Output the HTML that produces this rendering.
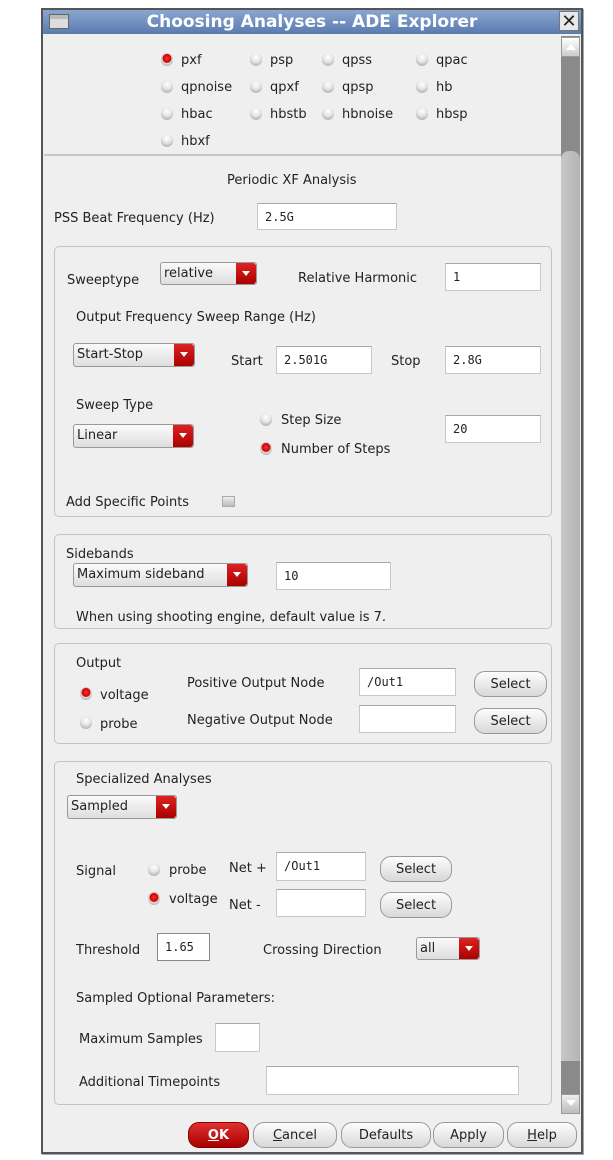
<!DOCTYPE html>
<html><head><meta charset="utf-8"><style>
*{box-sizing:border-box;margin:0;padding:0}
body{width:613px;height:1160px;background:#fff;position:relative;overflow:hidden;font-family:"DejaVu Sans","Liberation Sans",sans-serif;font-size:13px;color:#222}
div,span{position:absolute}
.t{white-space:nowrap;line-height:16px;margin-top:2px}
.in{background:#fff;border:1px solid #c8c8c8;border-top-color:#a8a8a8;font-family:"DejaVu Sans Mono","Liberation Mono",monospace;font-size:12px;padding-left:7px;line-height:26px}
.dd{border:1px solid #999;border-radius:3px;background:linear-gradient(#fafafa,#dedede);line-height:22px;padding-left:3px}
.dd b{position:absolute;right:0;top:0;bottom:0;width:20px;background:linear-gradient(#d22,#a00);border-radius:0 3px 3px 0}
.dd b:after{content:"";position:absolute;left:6px;top:8px;border:4px solid transparent;border-top:5px solid #fff}
.r{width:12px;height:12px;border-radius:50%;background:radial-gradient(circle at 50% 35%,#fff,#e4e4e4 50%,#999);box-shadow:0 1px 0 #bbb}
.r.on{background:radial-gradient(circle at 50% 45%,#f33,#c00 45%,#ddd 55%,#999)}
.box{border:1px solid #c4c4c4;border-radius:5px}
.btn{border:1px solid #999;border-radius:11px;background:linear-gradient(#fdfdfd,#d8d8d8);text-align:center;line-height:25px}
</style></head><body>
<div style="left:41px;top:8px;width:542px;height:1146px;border:2px solid #555;box-shadow:1px 1px 0 #9ab;background:#efefef"></div>
<div style="left:43px;top:10px;width:538px;height:24px;background:linear-gradient(#8aa6d0,#5a7bb0)"></div>
<div style="left:49px;top:14px;width:20px;height:15px;border:1px solid #666;background:linear-gradient(#bbb 30%,#ddd 30%)"></div>
<div class="t" style="left:43px;top:9px;width:538px;text-align:center;color:#fff;font-weight:bold;font-size:17px;line-height:22px">Choosing Analyses -- ADE Explorer</div>
<div style="left:559px;top:11px;width:20px;height:20px;border:1px solid #777;background:#e8e8e8;text-align:center;font-size:18px;line-height:19px;font-weight:bold;color:#222">✕</div>
<div style="left:561px;top:36px;width:19px;height:1078px;background:#8a8a8a"></div>
<div style="left:561px;top:37px;width:19px;height:20px;background:linear-gradient(#fff,#ccc);border:1px solid #999"></div>
<div style="left:566px;top:44px;border:5px solid transparent;border-bottom:6px solid #fff;border-top:0"></div>
<div style="left:561px;top:151px;width:19px;height:910px;background:linear-gradient(90deg,#c8c8c8,#b4b4b4);border-radius:8px 8px 0 0"></div>
<div style="left:561px;top:1094px;width:19px;height:20px;background:linear-gradient(#eee,#bbb);border:1px solid #999"></div>
<div style="left:566px;top:1100px;border:5px solid transparent;border-top:6px solid #fff;border-bottom:0"></div>
<div class="r on" style="left:161px;top:53px"></div><div class="t" style="left:181px;top:51px">pxf</div>
<div class="r" style="left:250px;top:53px"></div><div class="t" style="left:270px;top:51px">psp</div>
<div class="r" style="left:322px;top:53px"></div><div class="t" style="left:342px;top:51px">qpss</div>
<div class="r" style="left:416px;top:53px"></div><div class="t" style="left:436px;top:51px">qpac</div>
<div class="r" style="left:161px;top:80px"></div><div class="t" style="left:181px;top:78px">qpnoise</div>
<div class="r" style="left:250px;top:80px"></div><div class="t" style="left:270px;top:78px">qpxf</div>
<div class="r" style="left:322px;top:80px"></div><div class="t" style="left:342px;top:78px">qpsp</div>
<div class="r" style="left:416px;top:80px"></div><div class="t" style="left:436px;top:78px">hb</div>
<div class="r" style="left:161px;top:107px"></div><div class="t" style="left:181px;top:105px">hbac</div>
<div class="r" style="left:250px;top:107px"></div><div class="t" style="left:270px;top:105px">hbstb</div>
<div class="r" style="left:322px;top:107px"></div><div class="t" style="left:342px;top:105px">hbnoise</div>
<div class="r" style="left:416px;top:107px"></div><div class="t" style="left:436px;top:105px">hbsp</div>
<div class="r" style="left:161px;top:134px"></div><div class="t" style="left:181px;top:132px">hbxf</div>
<div style="left:44px;top:154px;width:517px;height:2px;background:#c8c8c8"></div>
<div class="t" style="left:227px;top:171px">Periodic XF Analysis</div>
<div class="t" style="left:54px;top:209px">PSS Beat Frequency (Hz)</div>
<div class="in" style="left:257px;top:203px;width:140px;height:27px">2.5G</div>
<div class="box" style="left:54px;top:246px;width:498px;height:271px"></div>
<div class="t" style="left:67px;top:271px">Sweeptype</div>
<div class="dd" style="left:160px;top:262px;width:97px;height:23px">relative<b></b></div>
<div class="t" style="left:298px;top:269px">Relative Harmonic</div>
<div class="in" style="left:445px;top:263px;width:96px;height:28px">1</div>
<div class="t" style="left:76px;top:308px">Output Frequency Sweep Range (Hz)</div>
<div class="dd" style="left:73px;top:343px;width:122px;height:24px">Start-Stop<b></b></div>
<div class="t" style="left:231px;top:352px">Start</div>
<div class="in" style="left:276px;top:346px;width:96px;height:28px">2.501G</div>
<div class="t" style="left:391px;top:352px">Stop</div>
<div class="in" style="left:445px;top:346px;width:96px;height:28px">2.8G</div>
<div class="t" style="left:76px;top:396px">Sweep Type</div>
<div class="dd" style="left:73px;top:424px;width:121px;height:24px">Linear<b></b></div>
<div class="r" style="left:260px;top:413px"></div><div class="t" style="left:281px;top:411px">Step Size</div>
<div class="r on" style="left:260px;top:442px"></div><div class="t" style="left:281px;top:440px">Number of Steps</div>
<div class="in" style="left:445px;top:415px;width:96px;height:28px">20</div>
<div class="t" style="left:66px;top:493px">Add Specific Points</div>
<div style="left:222px;top:496px;width:13px;height:11px;background:linear-gradient(#eee,#bbb);border:1px solid #aaa"></div>
<div class="box" style="left:54px;top:534px;width:498px;height:95px"></div>
<div class="t" style="left:66px;top:545px">Sidebands</div>
<div class="dd" style="left:73px;top:563px;width:175px;height:24px">Maximum sideband<b></b></div>
<div class="in" style="left:276px;top:562px;width:115px;height:28px">10</div>
<div class="t" style="left:76px;top:608px">When using shooting engine, default value is 7.</div>
<div class="box" style="left:54px;top:643px;width:498px;height:101px"></div>
<div class="t" style="left:76px;top:654px">Output</div>
<div class="r on" style="left:80px;top:687px"></div><div class="t" style="left:100px;top:686px">voltage</div>
<div class="r" style="left:80px;top:716px"></div><div class="t" style="left:100px;top:715px">probe</div>
<div class="t" style="left:187px;top:674px">Positive Output Node</div>
<div class="in" style="left:359px;top:668px;width:97px;height:28px">/Out1</div>
<div class="btn" style="left:474px;top:671px;width:73px;height:26px">Select</div>
<div class="t" style="left:187px;top:711px">Negative Output Node</div>
<div class="in" style="left:359px;top:705px;width:97px;height:28px"></div>
<div class="btn" style="left:474px;top:708px;width:73px;height:26px">Select</div>
<div class="box" style="left:54px;top:761px;width:498px;height:344px"></div>
<div class="t" style="left:76px;top:770px">Specialized Analyses</div>
<div class="dd" style="left:67px;top:795px;width:110px;height:24px">Sampled<b></b></div>
<div class="t" style="left:76px;top:862px">Signal</div>
<div class="r" style="left:148px;top:863px"></div><div class="t" style="left:169px;top:861px">probe</div>
<div class="r on" style="left:148px;top:892px"></div><div class="t" style="left:169px;top:890px">voltage</div>
<div class="t" style="left:229px;top:859px">Net +</div>
<div class="in" style="left:276px;top:852px;width:90px;height:29px">/Out1</div>
<div class="btn" style="left:380px;top:856px;width:72px;height:26px">Select</div>
<div class="t" style="left:229px;top:896px">Net -</div>
<div class="in" style="left:276px;top:889px;width:90px;height:28px"></div>
<div class="btn" style="left:380px;top:892px;width:72px;height:26px">Select</div>
<div class="t" style="left:76px;top:941px">Threshold</div>
<div class="in" style="left:157px;top:933px;width:53px;height:28px;border-color:#888">1.65</div>
<div class="t" style="left:263px;top:941px">Crossing Direction</div>
<div class="dd" style="left:416px;top:937px;width:64px;height:23px">all<b></b></div>
<div class="t" style="left:76px;top:989px">Sampled Optional Parameters:</div>
<div class="t" style="left:79px;top:1030px">Maximum Samples</div>
<div class="in" style="left:215px;top:1023px;width:45px;height:29px"></div>
<div class="t" style="left:79px;top:1073px">Additional Timepoints</div>
<div class="in" style="left:266px;top:1066px;width:253px;height:29px"></div>
<div class="btn" style="left:188px;top:1122px;width:61px;height:26px;background:linear-gradient(#e03030,#a00);color:#fff;font-weight:bold;border-color:#800"><u>O</u>K</div>
<div class="btn" style="left:253px;top:1122px;width:84px;height:26px"><u>C</u>ancel</div>
<div class="btn" style="left:341px;top:1122px;width:90px;height:26px">Defaults</div>
<div class="btn" style="left:433px;top:1122px;width:71px;height:26px">Apply</div>
<div class="btn" style="left:507px;top:1122px;width:70px;height:26px"><u>H</u>elp</div>
</body></html>
